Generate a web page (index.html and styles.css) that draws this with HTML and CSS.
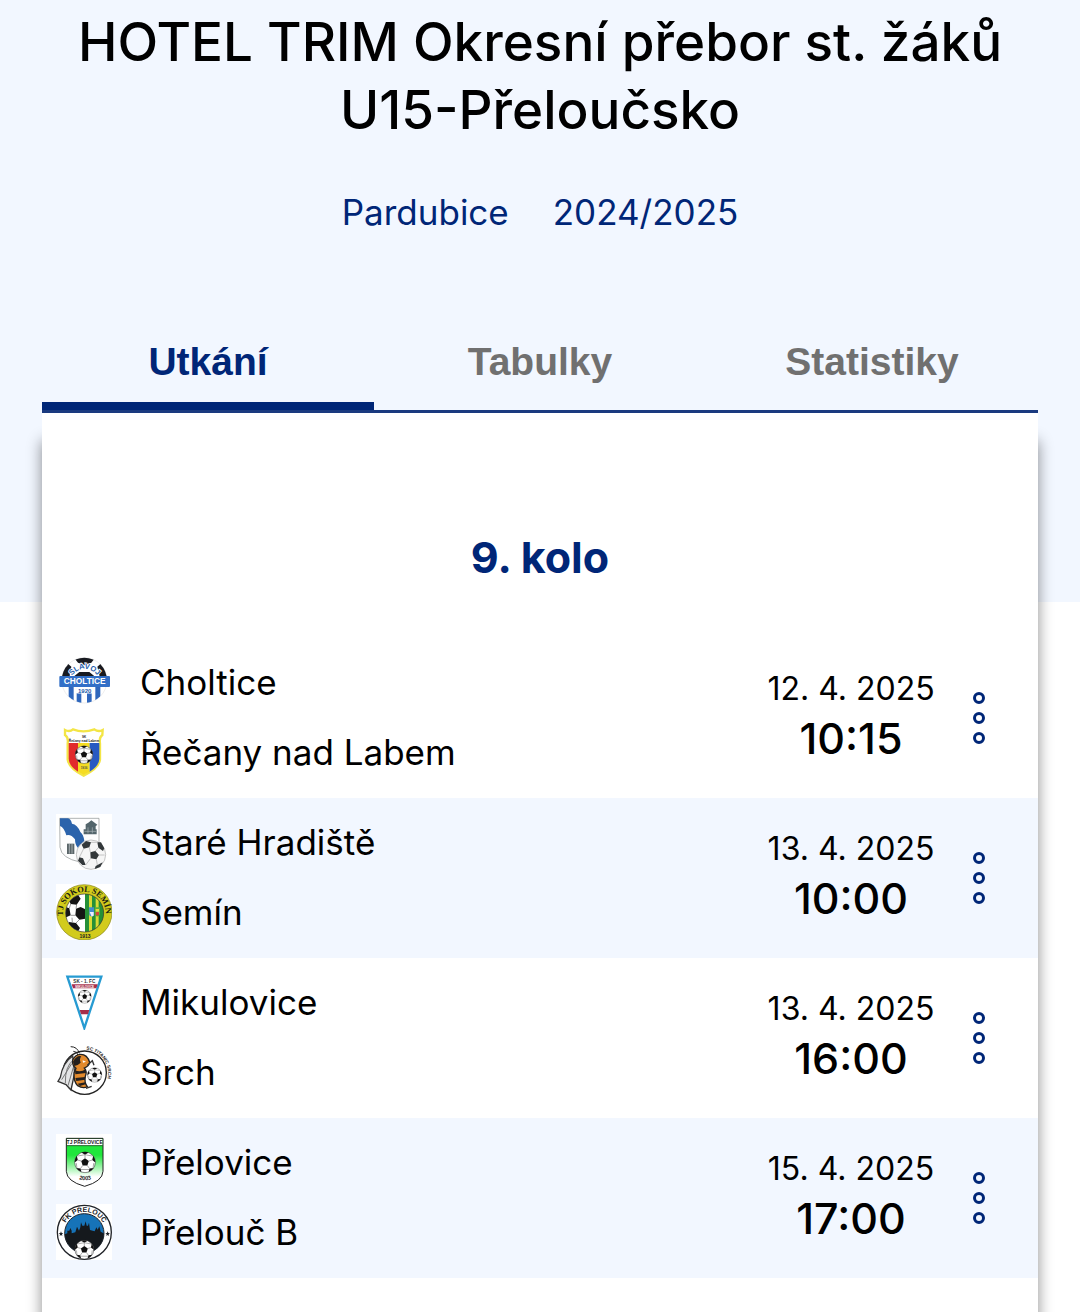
FILE: index.html
```
<!DOCTYPE html>
<html lang="cs">
<head>
<meta charset="utf-8">
<meta name="viewport" content="width=device-width, initial-scale=1">
<title>HOTEL TRIM Okresní přebor st. žáků U15-Přeloučsko</title>
<link rel="stylesheet" href="styles.css">
</head>
<body>
<svg class="defs" width="0" height="0" aria-hidden="true">
  <symbol id="ball" viewBox="-52 -52 104 104">
    <circle r="49" fill="#fff" stroke="#444" stroke-width="3"/>
    <g fill="#111">
      <path d="M0-19 18-6 11 15-11 15-18-6Z"/>
      <path d="M-17-46Q0-53 17-46L0-36Z"/>
      <path d="M39-31Q50-15 49 1L34-11Z"/>
      <path d="M41 27Q32 41 17 46L21 29Z"/>
      <path d="M-41 27Q-32 41-17 46L-21 29Z"/>
      <path d="M-39-31Q-50-15-49 1L-34-11Z"/>
    </g>
    <path d="M0-19V-36M18-6 34-11M11 15 21 29M-11 15-21 29M-18-6-34-11M0-36 34-30M0-36-34-30M41 4 38 29M-41 4-38 29M-21 34H21" fill="none" stroke="#777" stroke-width="3"/>
  </symbol>
</svg>

<header class="hero">
  <h1 class="title">HOTEL TRIM Okresní přebor st. žáků U15-Přeloučsko</h1>
  <p class="meta"><span>Pardubice</span><span>2024/2025</span></p>
</header>

<main class="content">
  <nav class="tabs">
    <a class="tab tab-active" href="#utkani">Utkání</a>
    <a class="tab" href="#tabulky">Tabulky</a>
    <a class="tab" href="#statistiky">Statistiky</a>
  </nav>

  <section class="card" id="utkani">
    <h2 class="round">9. kolo</h2>
    <ul class="matches">
      <li class="match">
        <div class="teams">
          <div class="team">
            <svg class="logo" viewBox="18 12 168 168" aria-hidden="true">
              <clipPath id="c1"><circle cx="103" cy="91" r="68"/></clipPath>
              <circle cx="103" cy="91" r="68" fill="#fff" stroke="#ccc" stroke-width="1"/>
              <g clip-path="url(#c1)">
                <path d="M70 20H138L124 38 104 46 84 38ZM28 60 48 36 64 50 58 84H28ZM178 60 158 36 142 50 150 84H178ZM66 84 88 66H118L140 84Z" fill="#181a20"/>
                <path d="M56 110h15v50H56zM80 130h14v30H80zM111 130h14v30h-14zM136 110h15v50h-15z" fill="#2f67bd"/>
              </g>
              <path id="p1" d="M64 78Q103 34 144 78" fill="none"/>
              <text class="emblem" fill="#245ba9" stroke="#fff" stroke-width="5" paint-order="stroke" font-size="23"><textPath href="#p1" startOffset="50%" text-anchor="middle">SLAVOJ</textPath></text>
              <rect x="28" y="78" width="152" height="33" rx="3" fill="#326fc7"/>
              <text class="emblem" x="104" y="103" text-anchor="middle" font-size="25" fill="#fff">CHOLTICE</text>
              <rect x="82" y="114" width="44" height="16" fill="#fff"/>
              <text class="emblem" x="104" y="129" text-anchor="middle" font-size="18" fill="#245ba9">1920</text>
            </svg>
            <span>Choltice</span>
          </div>
          <div class="team">
            <svg class="logo" viewBox="18 18 168 168" aria-hidden="true">
              <path d="M45 36Q59 43 69 34 100 46 133 34 145 43 158 36L157 51Q147 58 150 76V125Q146 151 101 173 57 151 53 125V76Q56 58 45 51Z" fill="#fff" stroke="#f3e545" stroke-width="7"/>
              <path d="M56 75H84V161Q58 145 56 123Z" fill="#e12a2c"/>
              <path d="M84 75H119V161L101 170 84 161Z" fill="#f5dc22"/>
              <path d="M119 75H148V123Q146 145 119 161Z" fill="#285ac2"/>
              <text class="emblem" x="102" y="61" text-anchor="middle" font-size="9" fill="#222">SK</text>
              <text class="emblem" x="102" y="72" text-anchor="middle" font-size="10" fill="#222">Řečany nad Labem</text>
              <use href="#ball" x="74" y="82" width="56" height="56"/>
              <text class="emblem" x="102" y="152" text-anchor="middle" font-size="9" fill="#554">1936</text>
            </svg>
            <span>Řečany nad Labem</span>
          </div>
        </div>
        <div class="when"><span class="date">12. 4. 2025</span><strong class="time">10:15</strong></div>
        <button class="more" type="button" aria-label="Další možnosti"><i></i><i></i><i></i></button>
      </li>

      <li class="match">
        <div class="teams">
          <div class="team">
            <svg class="logo" viewBox="18 18 168 168" aria-hidden="true">
              <path d="M18 18H186V186H18Z" fill="#fff"/>
              <path d="M29 31H147V116Q143 147 90 162 34 151 30 118Z" fill="#fdfdfd" stroke="#8b9090" stroke-width="2"/>
              <path d="M30 31H54Q62 32 66 47 82 49 91 72 100 79 103 98L84 120Q75 111 75 94 63 78 49 82 42 58 30 54Z" fill="#2b63ab"/>
              <path d="M107 49 115 44 124 37 134 44 142 50 137 55V64H140V79H101V64H107V55Z" fill="#53656b"/>
              <path d="M103 70H139M114 58V76M127 58V76" stroke="#a9b5b8" stroke-width="2"/>
              <path d="M51 107H73V138H51Z" fill="#5a6568"/><path d="M58 108V137M66 108V137" stroke="#ccd2d3" stroke-width="2"/>
              <circle cx="123" cy="140" r="44" fill="#f6f6f6" stroke="#aaa" stroke-width="2"/>
              <path d="M95 110 108 99 123 103 118 118 101 122ZM142 103 153 103 163 121 159 129 145 119ZM121 133 136 129 147 141 139 154 122 151ZM88 148 99 151 107 171 97 171 84 158ZM137 174 158 163 151 177 134 183Z" fill="#33383a"/>
              <path d="M118 118 121 133M136 129 145 119M123 103 142 103M122 151 107 171M139 154 142 171M147 141 164 141M101 122 88 148" fill="none" stroke="#aaa" stroke-width="2"/>
            </svg>
            <span>Staré Hradiště</span>
          </div>
          <div class="team">
            <svg class="logo" viewBox="18 18 168 168" aria-hidden="true">
              <path d="M18 18H186V186H18Z" fill="#fff"/>
              <circle cx="103" cy="103" r="83" fill="#d2cb1c" stroke="#86851c" stroke-width="2"/>
              <clipPath id="c4"><circle cx="104" cy="105" r="57"/></clipPath>
              <g clip-path="url(#c4)">
                <path d="M45 45H105V165H45Z" fill="#fff"/>
                <path d="M52 56 84 50 92 62 80 80 62 78ZM44 86 58 91 62 112 44 120ZM78 92 92 87 106 94V122L88 125 76 112ZM57 132 78 135 90 150 82 164 56 152Z" fill="#151515"/>
                <path d="M62 78 58 91M80 80 78 92M62 112 76 112M66 119 67 132M88 125 78 135" stroke="#666" stroke-width="2"/>
                <path d="M105 45H165V165H105Z" fill="#269037"/>
                <path d="M117 45h9v120h-9zM137 45h9v120h-9z" fill="#d9da34"/>
              </g>
              <circle cx="104" cy="105" r="57" fill="none" stroke="#333" stroke-width="2"/>
              <path d="M117 88H132V111Q125 119 118 112Z" fill="#428bce"/><path d="M119 102H131V113L125 116Z" fill="#eef"/>
              <path d="M134 88H150V111Q142 119 134 112Z" fill="#54ae3f"/><path d="M137 93H147V101H137Z" fill="#e5d83b"/><path d="M137 102H147V109L142 114 137 109Z" fill="#d44a36"/>
              <path id="p4" d="M47 137A64 64 0 1 1 161 132" fill="none"/>
              <text class="emblem-serif" font-size="25" fill="#171a12"><textPath href="#p4" startOffset="50%" text-anchor="middle">TJ SOKOL SEMÍN</textPath></text>
              <text class="emblem" x="105" y="180" text-anchor="middle" font-size="15" fill="#222">1913</text>
            </svg>
            <span>Semín</span>
          </div>
        </div>
        <div class="when"><span class="date">13. 4. 2025</span><strong class="time">10:00</strong></div>
        <button class="more" type="button" aria-label="Další možnosti"><i></i><i></i><i></i></button>
      </li>

      <li class="match">
        <div class="teams">
          <div class="team">
            <svg class="logo" viewBox="18 18 168 168" aria-hidden="true">
              <path d="M52 26H154L103 180Z" fill="#fff" stroke="#279bd2" stroke-width="7"/>
              <text class="emblem" x="103" y="46" text-anchor="middle" font-size="14" fill="#333">SK - 1. FC</text>
              <path d="M65 49H143L139 61H69Z" fill="#a62e49"/>
              <text class="emblem" x="104" y="59" text-anchor="middle" font-size="9" fill="#fff">MIKULOVICE</text>
              <use href="#ball" x="83" y="65" width="42" height="42"/>
              <path d="M89 126H118L114 139H93Z" fill="#a62e49"/>
            </svg>
            <span>Mikulovice</span>
          </div>
          <div class="team">
            <svg class="logo" viewBox="18 12 168 168" aria-hidden="true">
              <circle cx="104" cy="98" r="65" fill="#fff" stroke="#222" stroke-width="4"/>
              <path d="M68 48Q38 68 31 112L24 124 48 134 63 150 74 99Z" fill="#e3e4e5" stroke="#333" stroke-width="4"/>
              <path d="M70 60Q45 79 46 129M70 82 54 137M65 71 35 119" fill="none" stroke="#777" stroke-width="3"/>
              <path d="M62 20Q82 20 88 40M70 34Q82 34 84 46" fill="none" stroke="#222" stroke-width="3"/>
              <path d="M68 60Q76 43 92 43 112 43 119 67 116 79 103 84 112 94 106 109 102 127 112 140 99 147 83 137 71 126 72 99L78 85Q66 77 68 60Z" fill="#e28a2d" stroke="#222" stroke-width="4"/>
              <path d="M69 65Q80 45 94 49 87 57 92 68 83 77 73 78ZM75 91Q92 98 107 88L108 99 76 103ZM76 114 106 111 105 119 79 123ZM83 131 106 127 107 133 90 138Z" fill="#24201e"/>
              <path d="M98 61 108 65 99 68Z" fill="#fff"/>
              <path d="M112 76 127 62 132 76M108 145 125 139" fill="none" stroke="#333" stroke-width="4"/>
              <use href="#ball" x="111" y="82" width="46" height="46"/>
              <path id="p6" d="M109 29A71 71 0 0 1 172 116" fill="none"/>
              <text class="emblem" font-size="14" fill="#252525"><textPath href="#p6">SC TITANIC SRCH</textPath></text>
            </svg>
            <span>Srch</span>
          </div>
        </div>
        <div class="when"><span class="date">13. 4. 2025</span><strong class="time">16:00</strong></div>
        <button class="more" type="button" aria-label="Další možnosti"><i></i><i></i><i></i></button>
      </li>

      <li class="match">
        <div class="teams">
          <div class="team">
            <svg class="logo" viewBox="18 18 168 168" aria-hidden="true">
              <linearGradient id="g7" x2="0" y2="1"><stop offset=".35" stop-color="#20e63b"/><stop offset=".8" stop-color="#fff"/></linearGradient>
              <path d="M18 18H186V186H18Z" fill="#fff"/>
              <path d="M49 31H159V130Q158 160 104 175 50 160 49 130Z" fill="url(#g7)" stroke="#222" stroke-width="3"/>
              <path d="M51 33H157V52H51Z" fill="#fff"/><path d="M50 53H158" stroke="#222" stroke-width="2"/>
              <text class="emblem" x="104" y="49" text-anchor="middle" font-size="15" fill="#222">TJ PŘELOVICE</text>
              <use href="#ball" x="72" y="70" width="66" height="66"/>
              <path id="p7" d="M79 150Q104 163 132 150" fill="none"/>
              <text class="emblem" font-size="17" fill="#222"><textPath href="#p7" startOffset="50%" text-anchor="middle">2003</textPath></text>
            </svg>
            <span>Přelovice</span>
          </div>
          <div class="team">
            <svg class="logo" viewBox="18 18 168 168" aria-hidden="true">
              <path d="M18 18H186V186H18Z" fill="#fff"/>
              <circle cx="103" cy="103" r="81" fill="#fff" stroke="#202328" stroke-width="4"/>
              <clipPath id="c8"><circle cx="103" cy="106" r="59"/></clipPath>
              <g clip-path="url(#c8)">
                <path d="M40 40H170V180H40Z" fill="#1673b8"/>
                <path d="M40 110 52 106V98H58L61 90 65 98V106L76 103 81 86 87 98 91 88 93 73 97 83H103L107 70 110 83H114L117 74 120 96 128 98 134 100 139 88 143 95 148 85 152 101 166 109V180H40Z" fill="#15191d"/>
              </g>
              <circle cx="103" cy="106" r="59" fill="none" stroke="#202328" stroke-width="3"/>
              <use href="#ball" x="73" y="125" width="60" height="60"/>
              <path id="p8" d="M41 90A64 64 0 0 1 165 90" fill="none"/>
              <text class="emblem" font-size="21" fill="#202328"><textPath href="#p8" startOffset="50%" text-anchor="middle">FK PŘELOUČ</textPath></text>
              <path d="M33 100 35 105 40 106 36 109 37 114 33 111 29 114 30 109 26 106 31 105ZM173 100 175 105 180 106 176 109 177 114 173 111 169 114 170 109 166 106 171 105Z" fill="#202328"/>
            </svg>
            <span>Přelouč B</span>
          </div>
        </div>
        <div class="when"><span class="date">15. 4. 2025</span><strong class="time">17:00</strong></div>
        <button class="more" type="button" aria-label="Další možnosti"><i></i><i></i><i></i></button>
      </li>
    </ul>
  </section>
</main>
</body>
</html>
```
FILE: styles.css
```
* { box-sizing: border-box; }

body {
  margin: 0;
  min-height: 100vh;
  display: flex;
  flex-direction: column;
  background: linear-gradient(#f2f7ff 602px, #fff 602px);
  color: #000;
  font-family: Inter, "Liberation Sans", sans-serif;
}

.defs { position: absolute; }

.hero {
  padding: 8px 42px 0;
  text-align: center;
}

.title {
  margin: 0;
  font-size: 53px;
  font-weight: 500;
  line-height: 68px;
}

.meta {
  margin: 44px 0 0;
  display: flex;
  justify-content: center;
  gap: 44px;
  color: #002677;
  font-size: 35px;
  line-height: 48px;
}

.content {
  flex: 1;
  display: flex;
  flex-direction: column;
  margin: 84px 42px 0;
}

.tabs {
  display: grid;
  grid-template-columns: repeat(3, 1fr);
  border-bottom: 3px solid #1a3a7f;
}

.tab {
  padding: 18px 0 16px;
  border-bottom: 8px solid transparent;
  color: #707070;
  font-family: "Liberation Sans", Arial, sans-serif;
  font-size: 39px;
  font-weight: 700;
  line-height: 48px;
  text-align: center;
  text-decoration: none;
}

.tab-active {
  border-color: #002677;
  color: #002677;
}

.card {
  flex: 1;
  background: #fff;
  box-shadow: 0 28px 14px rgba(0, 0, 0, .45);
  clip-path: inset(0 -32px);
}

.round {
  margin: 0;
  padding: 112px 0 49px;
  color: #002677;
  font-size: 43px;
  font-weight: 700;
  line-height: 64px;
  text-align: center;
}

.matches {
  margin: 0;
  padding: 0;
  list-style: none;
}

.match {
  display: flex;
  align-items: center;
  min-height: 160px;
  padding: 9px 31px 9px 14px;
}

.match:nth-child(even) { background: #f2f7ff; }

.teams {
  flex: 1;
  padding-bottom: 2px;
}

.team {
  display: flex;
  align-items: center;
  gap: 28px;
  min-height: 70px;
  font-size: 35px;
}

.logo {
  width: 56px;
  height: 56px;
  flex: none;
}

.emblem {
  font-family: "Liberation Sans", Arial, sans-serif;
  font-weight: 700;
}

.emblem-serif {
  font-family: "Liberation Serif", "Times New Roman", serif;
  font-weight: 700;
}

.when {
  width: 200px;
  padding-bottom: 8px;
  display: flex;
  flex-direction: column;
  text-align: center;
}

.date {
  font-size: 32px;
  line-height: 48px;
}

.time {
  font-size: 43px;
  font-weight: 500;
  line-height: 50px;
}

.more {
  width: 56px;
  padding: 0;
  border: 0;
  background: none;
  display: flex;
  flex-direction: column;
  align-items: center;
  gap: 8px;
  cursor: pointer;
}

.more i {
  width: 12px;
  height: 12px;
  border: 3px solid #002677;
  border-radius: 50%;
}
```
